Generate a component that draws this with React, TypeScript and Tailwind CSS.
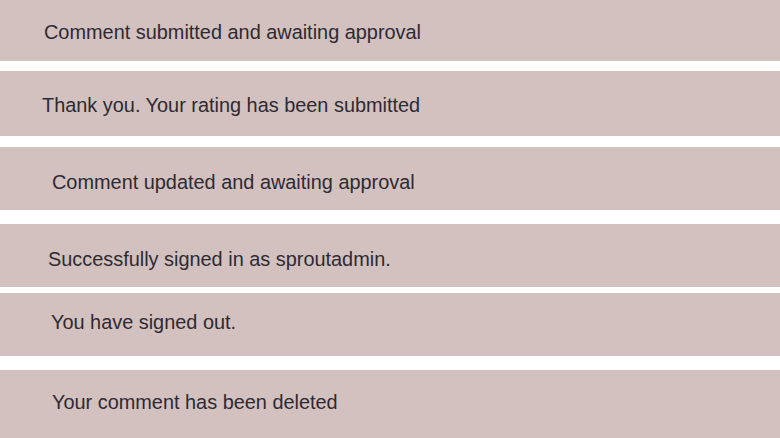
const rows = [
  { text: 'Comment submitted and awaiting approval', cls: 'h-[61px] pl-[44px] pt-[21px] mb-[10px]' },
  { text: 'Thank you. Your rating has been submitted', cls: 'h-[65px] pl-[42px] pt-[23px] mb-[11px]' },
  { text: 'Comment updated and awaiting approval', cls: 'h-[63px] pl-[52px] pt-[24px] mb-[14px]' },
  { text: 'Successfully signed in as sproutadmin.', cls: 'h-[63px] pl-[48px] pt-[24px] mb-[6px]' },
  { text: 'You have signed out.', cls: 'h-[63px] pl-[51px] pt-[18px] mb-[14px]' },
  { text: 'Your comment has been deleted', cls: 'h-[68px] pl-[52px] pt-[21px]' },
];

export default function App() {
  return (
    <div className="w-[780px] h-[438px] overflow-hidden bg-white font-['Liberation_Sans',Arial,sans-serif]">
      {rows.map((r) => (
        <div key={r.text} className={`bg-[#d3c1bf] text-[#2e2a33] text-[19.9px] leading-[22px] ${r.cls}`}>
          {r.text}
        </div>
      ))}
    </div>
  );
}
